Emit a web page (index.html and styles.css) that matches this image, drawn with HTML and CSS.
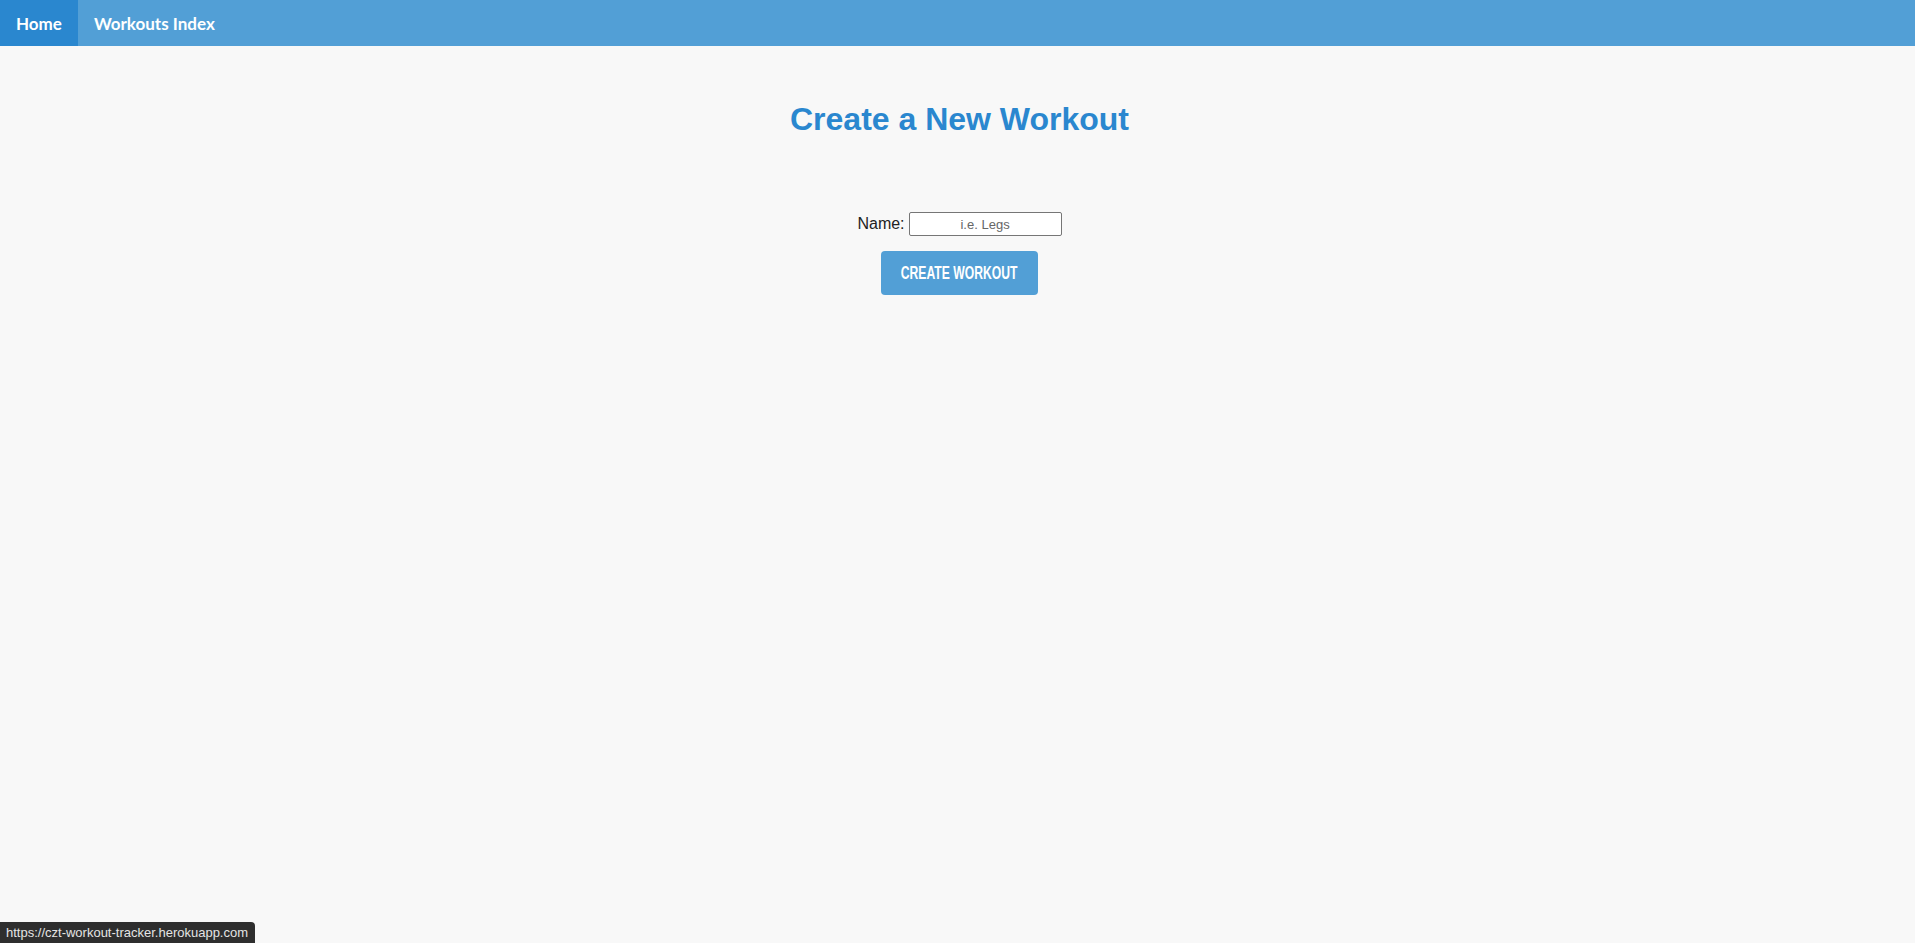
FILE: index.html
```html
<!DOCTYPE html>
<html>
<head>
<meta charset="utf-8">
<title>Create a New Workout</title>
<link rel="stylesheet" href="styles.css">
</head>
<body>
<nav class="navbar">
  <a class="nav-link active" href="#">Home</a>
  <a class="nav-link" href="#">Workouts Index</a>
</nav>
<main class="content">
  <h1 class="title">Create a New Workout</h1>
  <form class="workout-form">
    <div class="field">
      <label class="field-label" for="name">Name:</label>
      <input class="field-input" id="name" type="text" placeholder="i.e. Legs">
    </div>
    <button class="submit-btn" type="button"><span class="btn-text">Create Workout</span></button>
  </form>
</main>
<div class="status-bar">https://czt-workout-tracker.herokuapp.com</div>
</body>
</html>
```
FILE: styles.css
```css
html, body {
  margin: 0;
  padding: 0;
  height: 100%;
}
body {
  background: #f8f8f8;
  font-family: "Liberation Sans", Arial, sans-serif;
  color: #222;
}
.navbar {
  display: flex;
  height: 46px;
  background: #529fd6;
}
.nav-link {
  display: flex;
  align-items: center;
  padding: 0 16px;
  font-family: Lato, "Open Sans", sans-serif;
  font-weight: 700;
  font-size: 17px;
  color: #fff;
  text-decoration: none;
}
.nav-link.active {
  background: #2a87cf;
}
.content {
  display: flex;
  flex-direction: column;
  align-items: center;
  padding-left: 4px;
}
.title {
  margin: 55px 0 0;
  font-family: "Liberation Sans", Arial, sans-serif;
  font-weight: 700;
  font-size: 32px;
  color: #2a87cf;
}
.workout-form {
  margin-top: 74px;
  display: flex;
  flex-direction: column;
  align-items: center;
}
.field {
  display: flex;
  align-items: center;
  gap: 4px;
}
.field-label {
  font-size: 16px;
  color: #222;
}
.field-input {
  box-sizing: border-box;
  width: 153px;
  height: 24px;
  border: 1px solid #767676;
  border-radius: 2px;
  background: #fff;
  text-align: center;
  font-family: "Liberation Sans", Arial, sans-serif;
  font-size: 13px;
  padding: 0 4px;
}
.field-input::placeholder {
  color: #666;
}
.submit-btn {
  margin-top: 15px;
  width: 157px;
  height: 44px;
  border: none;
  border-radius: 4px;
  background: #529fd6;
  color: #fff;
  display: flex;
  align-items: center;
  justify-content: center;
  padding: 0;
  cursor: pointer;
}
.btn-text {
  display: inline-block;
  white-space: nowrap;
  font-family: "Liberation Sans", Arial, sans-serif;
  font-weight: 700;
  font-size: 19px;
  text-transform: uppercase;
  transform: scaleX(0.64);
}
.status-bar {
  position: fixed;
  left: 0;
  bottom: 0;
  height: 21px;
  padding: 0 7px 0 6px;
  display: flex;
  align-items: center;
  background: #2e2e2e;
  color: #e4e4e4;
  font-family: "Liberation Sans", Arial, sans-serif;
  font-size: 13px;
  border-top-right-radius: 4px;
}
```
